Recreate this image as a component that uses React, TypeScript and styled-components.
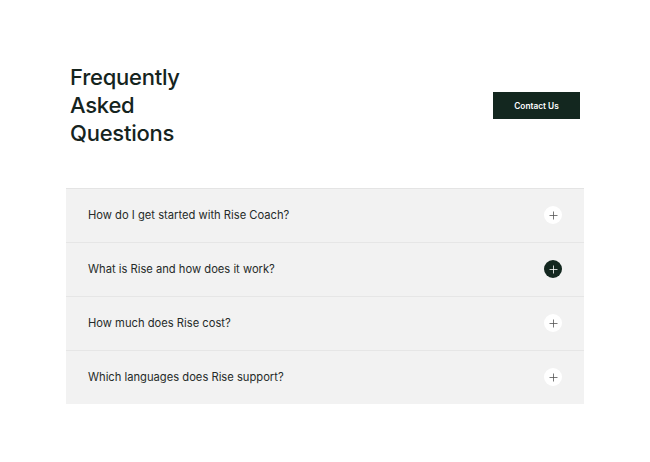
import React from 'react';
import styled, { createGlobalStyle } from 'styled-components';

const GlobalStyle = createGlobalStyle`
  html, body {
    margin: 0;
    padding: 0;
    background: #ffffff;
  }
  body {
    font-family: Inter, 'Open Sans', sans-serif;
    color: #15241e;
  }
`;

const questions = [
  'How do I get started with Rise Coach?',
  'What is Rise and how does it work?',
  'How much does Rise cost?',
  'Which languages does Rise support?',
];

export default function App() {
  return (
    <>
      <GlobalStyle />
      <Page>
        <Header>
          <Title>
            Frequently
            <br />
            Asked
            <br />
            Questions
          </Title>
          <ContactButton>Contact Us</ContactButton>
        </Header>
        <List>
          {questions.map((q, i) => (
            <Row key={q}>
              <Question>{q}</Question>
              <Toggle $active={i === 1}>
                <svg width='9' height='9' viewBox='0 0 9 9'>
                  <path d='M4.5 0.5v8M0.5 4.5h8' stroke='currentColor' strokeWidth='0.8' />
                </svg>
              </Toggle>
            </Row>
          ))}
        </List>
      </Page>
    </>
  );
}

const Page = styled.main`
  width: 650px;
  height: 462px;
  box-sizing: border-box;
  padding: 62px 66px 0 66px;
`;

const Header = styled.div`
  display: flex;
  align-items: flex-start;
  justify-content: space-between;
  padding: 0 4px 0 4px;
  margin-bottom: 41px;
`;

const Title = styled.h2`
  margin: 1px 0 0 0;
  font-size: 22px;
  line-height: 28px;
  font-weight: 500;
  letter-spacing: -0.25px;
  color: #15241e;
`;

const ContactButton = styled.button`
  width: 87px;
  height: 27px;
  border: none;
  background: #13271f;
  color: #ffffff;
  font-family: Inter, sans-serif;
  font-size: 8.3px;
  font-weight: 600;
  cursor: pointer;
  margin-top: 30px;
  padding: 0;
`;

const List = styled.div`
  border-top: 1px solid #e4e4e4;
  background: #f2f2f2;
  width: 518px;
`;

const Row = styled.div`
  height: 53px;
  display: flex;
  align-items: center;
  justify-content: space-between;
  padding: 0 22px;
  & + & {
    border-top: 1px solid #e6e6e6;
  }
`;

const Question = styled.span`
  font-size: 11.2px;
  color: #262b29;
  letter-spacing: 0px;
  margin-top: -2px;
`;

const Toggle = styled.span<{ $active?: boolean }>`
  width: 18px;
  height: 18px;
  border-radius: 50%;
  display: flex;
  align-items: center;
  justify-content: center;
  background: ${(p) => (p.$active ? '#13271f' : '#ffffff')};
  color: ${(p) => (p.$active ? '#ffffff' : '#555')};
  margin-top: -1px;
`;
